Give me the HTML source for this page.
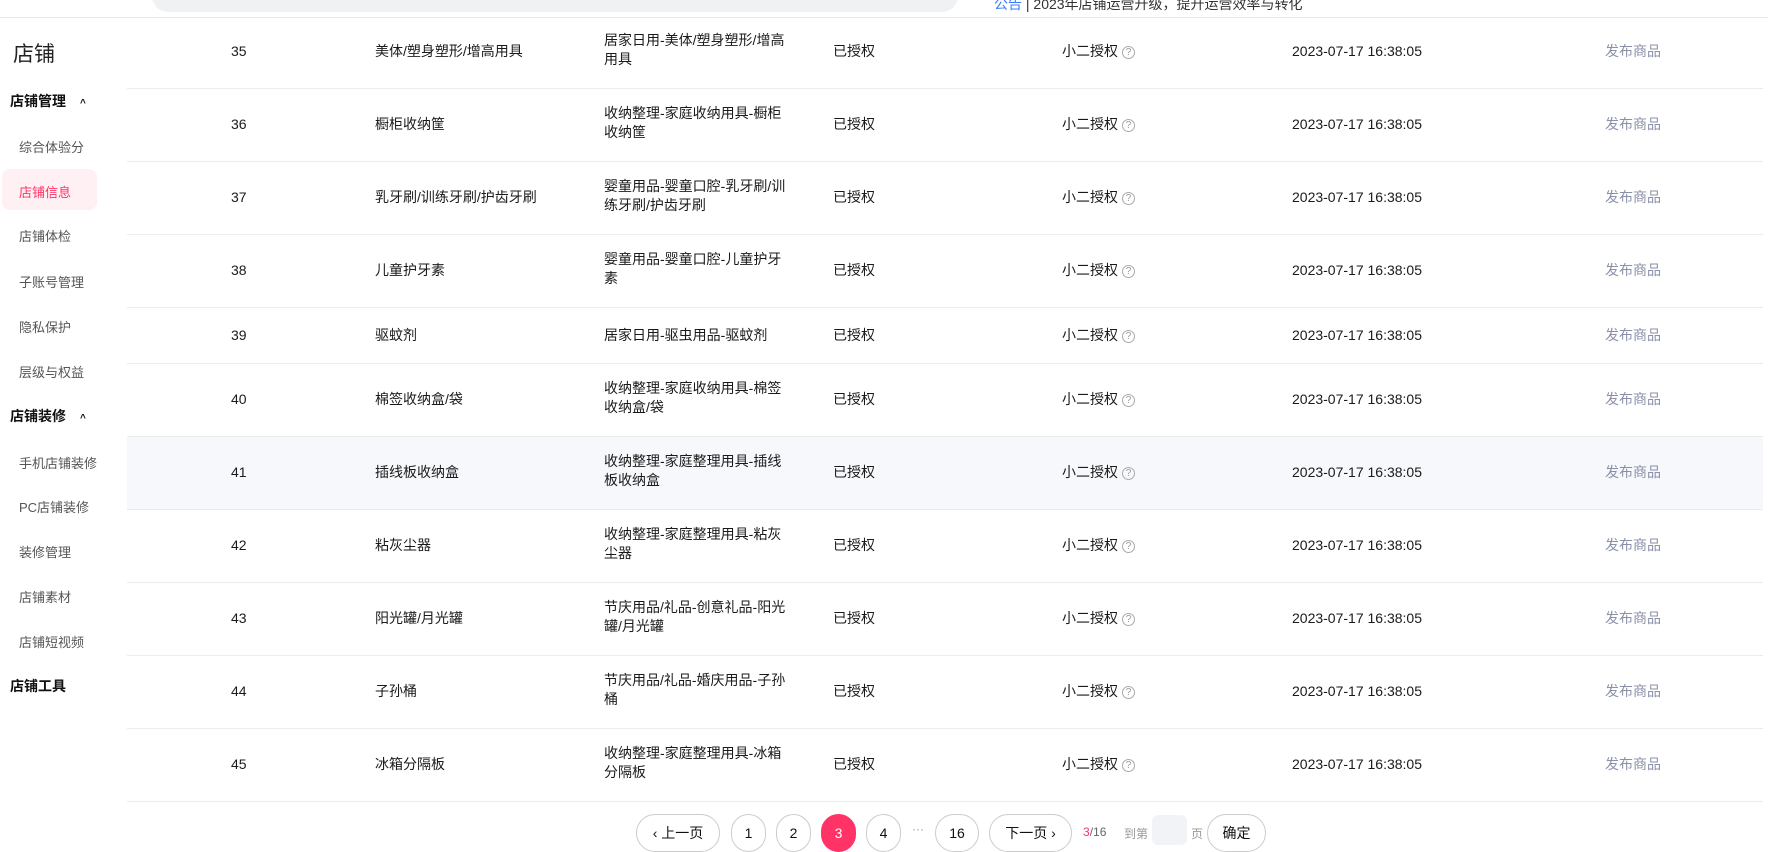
<!DOCTYPE html>
<html><head><meta charset="utf-8"><style>
*{margin:0;padding:0;box-sizing:border-box}
body{width:1768px;height:835px;overflow:hidden;background:#fff;font-family:"Liberation Sans","Noto Sans CJK SC",sans-serif;color:#111;position:relative}
.top{position:absolute;left:0;top:0;width:1768px;height:18px;border-bottom:1px solid #e8e8e8;background:#fff}
.search{position:absolute;left:152px;top:-20px;width:806px;height:32px;border-radius:16px;background:#f0f1f3}
.sb{position:absolute;left:0;top:0}
.sb div{position:absolute;white-space:nowrap}
.h1{left:13px;top:38px;font-size:21px;color:#222}
.g{left:10px;font-size:14px;font-weight:bold;color:#111}
.g span{font-size:10px;margin-left:14px}
.i{left:19px;font-size:13px;color:#555}
.act{position:absolute;left:2px;top:169px;width:95px;height:41px;border-radius:8px;background:#fff0f3}
.row{position:absolute;left:127px;width:1636px;border-bottom:1px solid #ececec;font-size:14px;color:#1a1a1a}
.row div{position:absolute;line-height:19px}
.c1{left:104px}.c2{left:248px}.c3{left:477px;width:186px}.c4{left:706px}.c5{left:935px}.c6{left:1165px}.c7{left:1478px;color:#8a90a8}
.q{display:inline-block;width:13px;height:13px;border:1px solid #aaa;border-radius:50%;font-size:10px;line-height:11px;text-align:center;color:#999;vertical-align:1px;margin-left:4px}
.pg{position:absolute;top:814px;height:38px;border:1px solid #ccc;border-radius:19px;font-size:14px;text-align:center;line-height:36px;background:#fff}
</style></head><body>
<div class="top"><div class="search"></div>
<div style="position:absolute;left:994px;top:-6px;font-size:14px;color:#3b7cff">公告 <span style="color:#333">| 2023年店铺运营升级，提升运营效率与转化</span></div></div>
<div class="sb">
<div class="h1">店铺</div>
<div class="act"></div>
<div class="g" style="top:91px">店铺管理<span>^</span></div>
<div class="i" style="top:137px">综合体验分</div>
<div class="i" style="top:182px;color:#ff3366">店铺信息</div>
<div class="i" style="top:226px">店铺体检</div>
<div class="i" style="top:272px">子账号管理</div>
<div class="i" style="top:317px">隐私保护</div>
<div class="i" style="top:362px">层级与权益</div>
<div class="g" style="top:406px">店铺装修<span>^</span></div>
<div class="i" style="top:453px">手机店铺装修</div>
<div class="i" style="top:497px">PC店铺装修</div>
<div class="i" style="top:542px">装修管理</div>
<div class="i" style="top:587px">店铺素材</div>
<div class="i" style="top:632px">店铺短视频</div>
<div class="g" style="top:676px">店铺工具</div>
</div>

<div class="row" style="top:18px;height:71px"><div class="c1" style="top:24px">35</div><div class="c2" style="top:24px">美体/塑身塑形/增高用具</div><div class="c3" style="top:13px">居家日用-美体/塑身塑形/增高用具</div><div class="c4" style="top:24px">已授权</div><div class="c5" style="top:24px">小二授权<span class="q">?</span></div><div class="c6" style="top:24px">2023-07-17 16:38:05</div><div class="c7" style="top:24px">发布商品</div></div>
<div class="row" style="top:89px;height:73px"><div class="c1" style="top:26px">36</div><div class="c2" style="top:26px">橱柜收纳筐</div><div class="c3" style="top:15px">收纳整理-家庭收纳用具-橱柜收纳筐</div><div class="c4" style="top:26px">已授权</div><div class="c5" style="top:26px">小二授权<span class="q">?</span></div><div class="c6" style="top:26px">2023-07-17 16:38:05</div><div class="c7" style="top:26px">发布商品</div></div>
<div class="row" style="top:162px;height:73px"><div class="c1" style="top:26px">37</div><div class="c2" style="top:26px">乳牙刷/训练牙刷/护齿牙刷</div><div class="c3" style="top:15px">婴童用品-婴童口腔-乳牙刷/训练牙刷/护齿牙刷</div><div class="c4" style="top:26px">已授权</div><div class="c5" style="top:26px">小二授权<span class="q">?</span></div><div class="c6" style="top:26px">2023-07-17 16:38:05</div><div class="c7" style="top:26px">发布商品</div></div>
<div class="row" style="top:235px;height:73px"><div class="c1" style="top:26px">38</div><div class="c2" style="top:26px">儿童护牙素</div><div class="c3" style="top:15px">婴童用品-婴童口腔-儿童护牙素</div><div class="c4" style="top:26px">已授权</div><div class="c5" style="top:26px">小二授权<span class="q">?</span></div><div class="c6" style="top:26px">2023-07-17 16:38:05</div><div class="c7" style="top:26px">发布商品</div></div>
<div class="row" style="top:308px;height:56px"><div class="c1" style="top:18px">39</div><div class="c2" style="top:18px">驱蚊剂</div><div class="c3" style="top:18px">居家日用-驱虫用品-驱蚊剂</div><div class="c4" style="top:18px">已授权</div><div class="c5" style="top:18px">小二授权<span class="q">?</span></div><div class="c6" style="top:18px">2023-07-17 16:38:05</div><div class="c7" style="top:18px">发布商品</div></div>
<div class="row" style="top:364px;height:73px"><div class="c1" style="top:26px">40</div><div class="c2" style="top:26px">棉签收纳盒/袋</div><div class="c3" style="top:15px">收纳整理-家庭收纳用具-棉签收纳盒/袋</div><div class="c4" style="top:26px">已授权</div><div class="c5" style="top:26px">小二授权<span class="q">?</span></div><div class="c6" style="top:26px">2023-07-17 16:38:05</div><div class="c7" style="top:26px">发布商品</div></div>
<div class="row" style="top:437px;height:73px;background:#f7f8fb"><div class="c1" style="top:26px">41</div><div class="c2" style="top:26px">插线板收纳盒</div><div class="c3" style="top:15px">收纳整理-家庭整理用具-插线板收纳盒</div><div class="c4" style="top:26px">已授权</div><div class="c5" style="top:26px">小二授权<span class="q">?</span></div><div class="c6" style="top:26px">2023-07-17 16:38:05</div><div class="c7" style="top:26px">发布商品</div></div>
<div class="row" style="top:510px;height:73px"><div class="c1" style="top:26px">42</div><div class="c2" style="top:26px">粘灰尘器</div><div class="c3" style="top:15px">收纳整理-家庭整理用具-粘灰尘器</div><div class="c4" style="top:26px">已授权</div><div class="c5" style="top:26px">小二授权<span class="q">?</span></div><div class="c6" style="top:26px">2023-07-17 16:38:05</div><div class="c7" style="top:26px">发布商品</div></div>
<div class="row" style="top:583px;height:73px"><div class="c1" style="top:26px">43</div><div class="c2" style="top:26px">阳光罐/月光罐</div><div class="c3" style="top:15px">节庆用品/礼品-创意礼品-阳光罐/月光罐</div><div class="c4" style="top:26px">已授权</div><div class="c5" style="top:26px">小二授权<span class="q">?</span></div><div class="c6" style="top:26px">2023-07-17 16:38:05</div><div class="c7" style="top:26px">发布商品</div></div>
<div class="row" style="top:656px;height:73px"><div class="c1" style="top:26px">44</div><div class="c2" style="top:26px">子孙桶</div><div class="c3" style="top:15px">节庆用品/礼品-婚庆用品-子孙桶</div><div class="c4" style="top:26px">已授权</div><div class="c5" style="top:26px">小二授权<span class="q">?</span></div><div class="c6" style="top:26px">2023-07-17 16:38:05</div><div class="c7" style="top:26px">发布商品</div></div>
<div class="row" style="top:729px;height:73px"><div class="c1" style="top:26px">45</div><div class="c2" style="top:26px">冰箱分隔板</div><div class="c3" style="top:15px">收纳整理-家庭整理用具-冰箱分隔板</div><div class="c4" style="top:26px">已授权</div><div class="c5" style="top:26px">小二授权<span class="q">?</span></div><div class="c6" style="top:26px">2023-07-17 16:38:05</div><div class="c7" style="top:26px">发布商品</div></div>

<div class="pg" style="left:636px;width:84px">‹ 上一页</div>
<div class="pg" style="left:731px;width:35px">1</div>
<div class="pg" style="left:776px;width:35px">2</div>
<div class="pg" style="left:821px;width:35px;background:#ff3366;border-color:#ff3366;color:#fff">3</div>
<div class="pg" style="left:866px;width:35px">4</div>
<div style="position:absolute;left:912px;top:822px;font-size:12px;color:#999">···</div>
<div class="pg" style="left:935px;width:44px">16</div>
<div class="pg" style="left:989px;width:83px">下一页 ›</div>
<div style="position:absolute;left:1083px;top:825px;font-size:12px;color:#666"><span style="color:#ff3366">3</span>/16</div>
<div style="position:absolute;left:1124px;top:825px;font-size:12px;color:#999">到第</div>
<div style="position:absolute;left:1152px;top:815px;width:35px;height:30px;background:#f2f3f6;border-radius:6px"></div>
<div style="position:absolute;left:1191px;top:825px;font-size:12px;color:#999">页</div>
<div class="pg" style="left:1207px;width:59px">确定</div>
</body></html>
